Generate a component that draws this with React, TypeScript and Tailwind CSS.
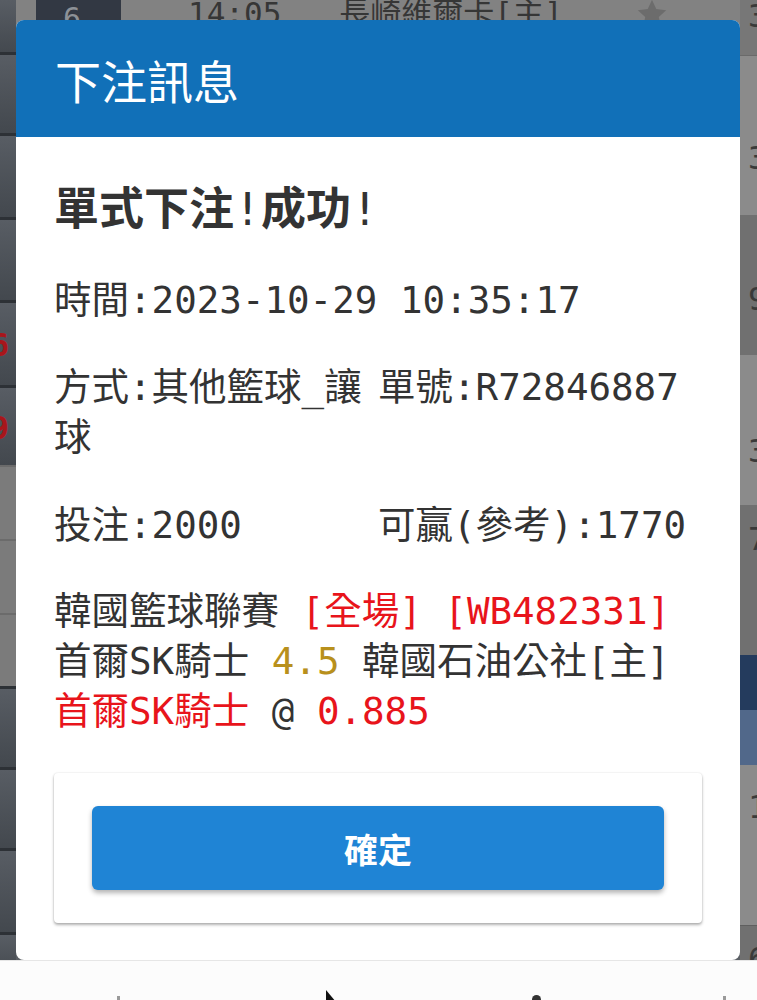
import React from 'react';

const mono = "font-['DejaVu_Sans_Mono','Noto_Sans_CJK_TC',monospace]";
const cjk = "font-['Noto_Sans_CJK_TC',sans-serif]";

type LeftBlock = { cls: string; red?: string; pt?: string };

const leftBlocks: LeftBlock[] = [
  { cls: 'h-[52px] bg-linear-to-b from-[#585d64] to-[#44494f]' },
  { cls: 'h-[81px] border-t-[3px] border-[#2d3136] bg-linear-to-b from-[#585d64] to-[#43484e]' },
  { cls: 'h-[84px] border-t-[3px] border-[#2d3136] bg-linear-to-b from-[#585d64] to-[#43484e]' },
  { cls: 'h-[83px] border-t-[3px] border-[#2d3136] bg-linear-to-b from-[#585d64] to-[#43484e]' },
  { cls: 'h-[85px] border-t-[3px] border-[#2d3136] bg-linear-to-b from-[#585d64] to-[#43484e]', red: '6', pt: 'pt-[26px]' },
  { cls: 'h-[80px] border-t-[3px] border-[#2d3136] bg-linear-to-b from-[#585d64] to-[#43484e]', red: '9', pt: 'pt-[24px]' },
  { cls: 'h-[74px] border-t-[2px] border-[#6b6b6b] bg-[#7b7b7b]' },
  { cls: 'h-[74px] border-t-[2px] border-[#6b6b6b] bg-[#7b7b7b]' },
  { cls: 'h-[73px] border-t-[2px] border-[#6b6b6b] bg-[#7b7b7b]' },
  { cls: 'h-[81px] border-t-[3px] border-[#2d3136] bg-linear-to-b from-[#585d64] to-[#43484e]' },
  { cls: 'h-[81px] border-t-[3px] border-[#2d3136] bg-linear-to-b from-[#585d64] to-[#43484e]' },
  { cls: 'h-[84px] border-t-[3px] border-[#2d3136] bg-linear-to-b from-[#585d64] to-[#43484e]' },
  { cls: 'h-[28px] border-t-[3px] border-[#2d3136] bg-linear-to-b from-[#585d64] to-[#4c5157]' },
];

type RightBlock = { cls: string; d?: string };

const rightBlocks: RightBlock[] = [
  { cls: 'h-[55px] bg-[#777777] pt-[0px]', d: '3' },
  { cls: 'h-[160px] bg-[#8b8b8b] pt-[86px] border-t border-[#6a6a6a]', d: '3' },
  { cls: 'h-[140px] bg-[#707070] pt-[68px]', d: '9' },
  { cls: 'h-[150px] bg-[#8b8b8b] pt-[80px]', d: '3' },
  { cls: 'h-[150px] bg-[#707070] pt-[18px]', d: '7' },
  { cls: 'h-[55px] bg-[#243b5d]' },
  { cls: 'h-[55px] bg-[#51688a]' },
  { cls: 'h-[160px] bg-[#8b8b8b] pt-[26px]', d: '1' },
  { cls: 'h-[35px] bg-[#707070] pt-[17px] border-t border-[#5f5f5f]', d: '6' },
];

function Background() {
  return (
    <div className="flex h-[960px] w-full">
      <div className="w-[16px] shrink-0 flex flex-col overflow-hidden">
        {leftBlocks.map((b, i) => (
          <div key={i} className={`${b.cls} ${b.pt ?? ''} shrink-0 overflow-hidden`}>
            {b.red && (
              <div className={`-ml-[10px] text-[32px] leading-[32px] font-bold text-[#a8161b] ${mono}`}>{b.red}</div>
            )}
          </div>
        ))}
      </div>
      <div className="flex-1 flex flex-col bg-[#5c6066]">
        <div className="h-[52px] bg-[#828282] flex items-start overflow-hidden">
          <div className="ml-[20px] -mt-[14px] w-[85px] h-[58px] rounded-[14px] bg-[#323843] flex items-center pl-[27px]">
            <span className={`text-[30px] leading-[30px] text-[#8d9197] mt-[8px] ${mono}`}>6</span>
          </div>
          <div className={`ml-[67px] -mt-[2px] text-[31px] leading-[31px] text-[#363636] ${mono}`}>14:05</div>
          <div className={`ml-[58px] -mt-[2px] text-[31px] leading-[31px] text-[#363636] ${mono}`}>長崎維爾卡[主]</div>
          <svg className="ml-[72px] -mt-[3px]" width="34" height="34" viewBox="0 0 24 24">
            <path d="M12 2l3 6.5 7 .8-5.2 4.8 1.5 7L12 17.6 5.7 21.1l1.5-7L2 9.3l7-.8z" fill="#6c6c6c" />
          </svg>
        </div>
      </div>
      <div className="w-[17px] shrink-0 flex flex-col overflow-hidden">
        {rightBlocks.map((b, i) => (
          <div key={i} className={`${b.cls} shrink-0 overflow-hidden pl-[8px]`}>
            {b.d && (
              <div className={`text-[32px] leading-[32px] text-[#3a3a3a] ${mono}`}>{b.d}</div>
            )}
          </div>
        ))}
      </div>
    </div>
  );
}

function BottomBar() {
  return (
    <div className="h-[40px] bg-[#fcfcfc] border-t border-[#e6e6e6] flex items-end overflow-hidden">
      <div className="ml-[117px] w-[3px] h-[4px] bg-[#9a9a9a]" />
      <svg className="ml-[206px] mb-[-2px]" width="12" height="12" viewBox="0 0 12 12">
        <polygon points="0,0 0,12 10,12" fill="#111111" />
      </svg>
      <div className="ml-[194px] w-[9px] h-[5px] rounded-t-full bg-[#333333]" />
      <div className="ml-[182px] w-[3px] h-[4px] bg-[#9a9a9a]" />
    </div>
  );
}

function Modal() {
  return (
    <div className="absolute left-[16px] top-[20px] w-[724px] h-[940px] bg-white rounded-[8px] overflow-hidden flex flex-col">
      <div className="h-[117px] shrink-0 bg-[#1170b8] flex items-center pl-[39px]">
        <span className={`text-white text-[46px] leading-none font-normal ${cjk}`}>下注訊息</span>
      </div>
      <div className={`flex flex-col px-[38px] pt-[43px] text-[#333333] ${mono}`}>
        <div className="text-[45px] leading-[60px] font-bold">
          單式下注<span className="font-normal">!</span>成功<span className="font-normal">!</span>
        </div>
        <div className="mt-[35px] text-[37.5px] leading-[50px]">時間:2023-10-29 10:35:17</div>
        <div className="mt-[37px] grid grid-cols-2 text-[37.5px] leading-[50px]">
          <div>方式:其他籃球_讓球</div>
          <div>單號:R72846887</div>
        </div>
        <div className="mt-[38px] grid grid-cols-2 text-[37.5px] leading-[50px]">
          <div>投注:2000</div>
          <div>可贏(參考):1770</div>
        </div>
        <div className="mt-[36px] text-[37.5px] leading-[50px]">
          <div>
            韓國籃球聯賽 <span className="text-[#e8141b]">[全場] [WB482331]</span>
          </div>
          <div>
            首爾SK騎士 <span className="text-[#b8901c]">4.5</span> 韓國石油公社[主]
          </div>
          <div>
            <span className="text-[#e8141b]">首爾SK騎士</span> @ <span className="text-[#e8141b]">0.885</span>
          </div>
        </div>
        <div className="mt-[37px] h-[150px] rounded-[4px] bg-white shadow-[0_2px_3px_rgba(0,0,0,0.3),0_0_2px_rgba(0,0,0,0.12)] px-[38px] py-[33px]">
          <button className={`w-full h-full rounded-[6px] bg-[#1f84d5] shadow-[0_3px_5px_rgba(0,0,0,0.3)] text-white text-[34px] font-bold ${cjk}`}>
            確定
          </button>
        </div>
      </div>
    </div>
  );
}

export default function App() {
  return (
    <div className="relative w-[757px] h-[1000px] overflow-hidden bg-white">
      <Background />
      <BottomBar />
      <Modal />
    </div>
  );
}
